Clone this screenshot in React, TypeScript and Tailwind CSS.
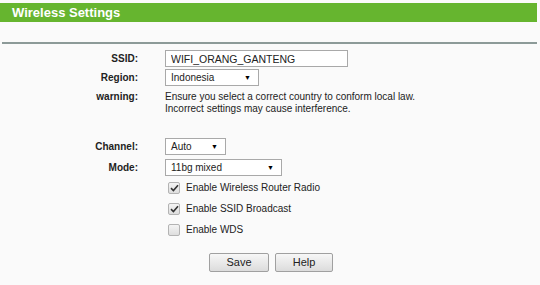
import { useState } from "react";

function Select({ value, options, width }: { value: string; options: string[]; width: string }) {
  return (
    <div className={`relative h-[17px] border border-[#a9a9a9] bg-white ${width}`}>
      <span className="absolute left-[5px] top-0 leading-[15px]">{value}</span>
      <span className="absolute right-[7px] top-[1px] text-[7px] leading-[13px] text-black">▼</span>
      <select className="absolute inset-0 opacity-0" defaultValue={value}>
        {options.map((o) => <option key={o}>{o}</option>)}
      </select>
    </div>
  );
}

function Check({ checked, label }: { checked: boolean; label: string }) {
  const [on, setOn] = useState(checked);
  return (
    <label className="flex items-center gap-[6px] pl-[3px]" onClick={() => setOn(!on)}>
      <span className="grid h-[12px] w-[12px] place-items-center rounded-[2px] border border-[#b3b3b3] bg-gradient-to-b from-[#f4f4f4] to-[#dedede]">
        {on && (
          <svg width="9" height="8" viewBox="0 0 9 8"><path d="M1 4.2 L3.4 6.5 L8 1.2" fill="none" stroke="#333" strokeWidth="1.6" /></svg>
        )}
      </span>
      <span>{label}</span>
    </label>
  );
}

export default function App() {
  return (
    <div className="h-[285px] w-[540px] bg-[#fafafa] pt-[3px] text-[10px] text-[#222] font-['Liberation_Sans',Arial,sans-serif]">
      <div className="mr-[3px] h-[19px] bg-[#66b52f] pl-[12px] text-[13px] font-bold leading-[19px] text-white">Wireless Settings</div>
      <div className="ml-[2px] mr-[3px] mt-[20px] h-[2px] bg-[#8c9a98]" />
      <div className="mt-[6px] grid grid-cols-[138px_1fr] gap-x-[27px]">
        <div className="text-right font-bold leading-[17px]">SSID:</div>
        <input defaultValue="WIFI_ORANG_GANTENG" className="h-[17px] w-[183px] border border-[#a9a9a9] bg-white px-[5px] text-[10.5px] leading-[15px] outline-none" />

        <div className="mt-[2px] text-right font-bold leading-[17px]">Region:</div>
        <div className="mt-[2px]"><Select value="Indonesia" options={["Indonesia"]} width="w-[94px]" /></div>

        <div className="mt-[5px] text-right font-bold leading-[12px]">warning:</div>
        <div className="mt-[5px] leading-[12px]">
          Ensure you select a correct country to conform local law.<br />
          Incorrect settings may cause interference.
        </div>

        <div className="mt-[23px] text-right font-bold leading-[17px]">Channel:</div>
        <div className="mt-[23px]"><Select value="Auto" options={["Auto"]} width="w-[61px]" /></div>

        <div className="mt-[4px] text-right font-bold leading-[17px]">Mode:</div>
        <div className="mt-[4px]"><Select value="11bg mixed" options={["11bg mixed"]} width="w-[117px]" /></div>

        <div />
        <div className="mt-[5px] flex flex-col gap-[8px] leading-[13px]">
          <Check checked label="Enable Wireless Router Radio" />
          <Check checked label="Enable SSID Broadcast" />
          <Check checked={false} label="Enable WDS" />
        </div>
      </div>
      <div className="mt-[17px] flex gap-[6px] pl-[209px]">
        <button className="h-[19px] w-[60px] rounded-[2px] border border-[#a0a0a0] bg-gradient-to-b from-[#f7f7f7] to-[#dcdcdc] text-[11px] leading-[17px]">Save</button>
        <button className="h-[19px] w-[58px] rounded-[2px] border border-[#a0a0a0] bg-gradient-to-b from-[#f7f7f7] to-[#dcdcdc] text-[11px] leading-[17px]">Help</button>
      </div>
    </div>
  );
}
